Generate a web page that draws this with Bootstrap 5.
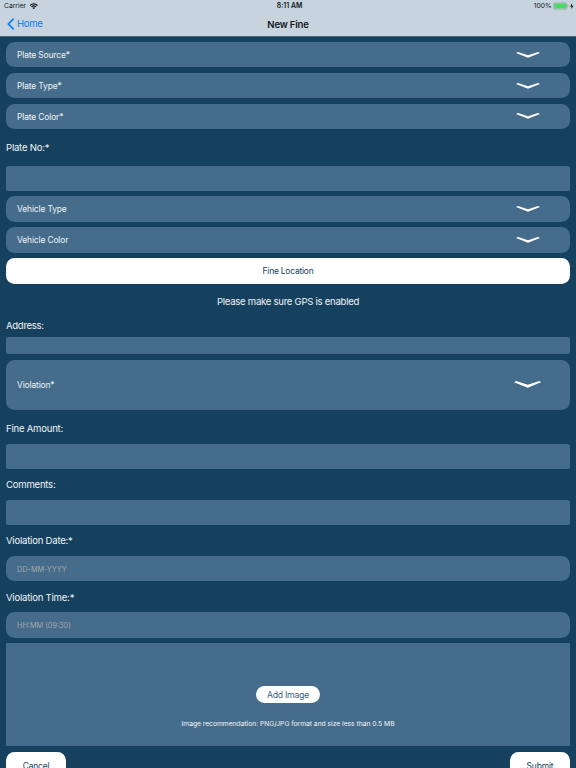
<!DOCTYPE html>
<html lang="en">
<head>
<meta charset="utf-8">
<meta name="viewport" content="width=device-width, initial-scale=1">
<title>New Fine</title>
<link href="https://cdn.jsdelivr.net/npm/bootstrap@5.3.0/dist/css/bootstrap.min.css" rel="stylesheet">
<style>
:root{--deep:#15415f;--field:#456c8b;--bar:#c7d3dd;--ios:#087cff}
html,body{height:768px;overflow:hidden}
body{background:var(--deep);font-family:Inter,"Liberation Sans",sans-serif;color:#f0f4f7;line-height:1}
.top-bar{height:37px;background:linear-gradient(var(--bar) 36px,#45687f 36px);color:#10161c}
.status-line{height:12px;font-size:6.75px}
.status-line>*,.title-line>*{flex:1 1 0}
.wifi-icon{margin-left:2.4px}
.st-time{font-size:6.9px;margin-left:-1px}
.title-line{height:23.8px;font-size:9.56px;letter-spacing:-.18px;padding-top:1.4px}
.back-link{color:var(--ios);letter-spacing:-.3px}
.form-area{padding:5px 6px 0}
.pick{height:25.3px;margin-bottom:5.6px;border-radius:8.5px;background:var(--field);padding:0 30.5px 0 11px;font-size:8.44px;letter-spacing:-.13px;color:#f0f4f7;border:0}
.pick-head span{padding-top:.9px}
.pick-tall{height:50.4px;margin-bottom:0;padding-right:29px}
.pick-tall svg{margin-bottom:2px}
.entry,.entry:focus{display:block;width:100%;min-height:0;height:25.2px;border:0;border-radius:2.5px;background:var(--field);padding:0 11px;font-size:7.3px;line-height:1;color:#fff}
.entry-round,.entry-round:focus{border-radius:8.5px;height:25.5px;padding-top:1.2px}
.entry::placeholder{color:#a3a8ac;opacity:1}
.entry-slim{height:16.6px;margin-bottom:6px}
.caption{display:flex;align-items:center;font-size:9.56px;letter-spacing:-.22px;height:30.8px;margin:0}
.cap-plate{height:36.7px}
.after-plate{height:5.5px}
.gps-note{height:36.2px;letter-spacing:-.26px}
.cap-address{height:17.5px;padding-bottom:6px;letter-spacing:-.29px}
.cap-first{height:33.6px;padding-top:3px}
.cap-time{padding-top:2px}
.locate{height:25.4px;border-radius:8.5px;font-size:8.44px;letter-spacing:-.2px;color:var(--deep);padding:0;border:0}
.photo-box{height:102.8px;background:var(--field);margin-top:5.6px;padding-top:43px}
.add-btn{width:64.4px;height:17.2px;padding:1px 0 0;border:0;font-size:8.7px;line-height:16.2px;letter-spacing:-.28px;color:#3a6486}
.hint{font-size:6.75px;letter-spacing:-.03px;margin-top:17.4px}
.foot{margin-top:5.6px}
.foot-btn{width:60px;height:28px;border-radius:8.5px;font-size:8.44px;letter-spacing:-.15px;color:var(--deep);padding:1.6px 0 0;border:0}
svg{display:block;flex:none}
</style>
<script src="https://cdn.jsdelivr.net/npm/bootstrap@5.3.0/dist/js/bootstrap.bundle.min.js"></script>
</head>
<body>
<svg class="d-none"><symbol id="chev" viewBox="0 0 24 6" preserveAspectRatio="none"><path d="M0 1 2 0l10 3.200L22 0l2 1L12 5.700Z" fill="#fff"/></symbol></svg>
<header class="top-bar">
  <div class="status-line d-flex align-items-center">
    <div class="d-flex align-items-center ps-1"><span>Carrier</span>
      <svg class="wifi-icon" width="9.600" height="6.500" viewBox="-1 0 18 12"><path d="M1 4.500a10 10 0 0 1 14 0M3.700 7.200a6.200 6.200 0 0 1 8.600 0" fill="none" stroke="#10161c" stroke-width="2.300"/><path d="m8 11.800-2.600-2.900a4 4 0 0 1 5.200 0z" fill="#10161c"/></svg>
    </div>
    <div class="text-center fw-semibold"><span class="st-time">8:11 AM</span></div>
    <div class="d-flex align-items-center justify-content-end"><span>100%</span>
      <svg width="24.300" height="8" viewBox=".7 0 24.300 8"><rect x="2.300" y=".9" width="13.200" height="6.300" rx="1.300" fill="#c7d3dd" stroke="#8b969e" stroke-width=".6"/><rect x="3" y="1.600" width="11.800" height="4.900" rx=".7" fill="#4cd964"/><path d="M16.200 3v2.200q.9-.3.900-1.100t-.9-1.100" fill="#8b969e"/><path d="m20.900 1.300-2.200 3.200h1.500l-.4 2.600 2.500-3.400h-1.600z" fill="#10161c"/></svg>
    </div>
  </div>
  <nav class="title-line d-flex align-items-center">
    <div><a class="back-link d-inline-flex align-items-center text-decoration-none" href="#"><svg width="17" height="12" viewBox="0 0 17 12"><path d="M13.600.6 8.400 6l5.200 5.400" fill="none" stroke="#087cff" stroke-width="1.700"/></svg><span>Home</span></a></div>
    <div class="text-center fw-semibold"><span>New Fine</span></div>
    <div></div>
  </nav>
</header>
<main class="form-area">
  <button type="button" class="pick pick-head w-100 d-flex align-items-center justify-content-between"><span>Plate Source*</span><svg width="24" height="6"><use href="#chev"/></svg></button>
  <button type="button" class="pick pick-head w-100 d-flex align-items-center justify-content-between"><span>Plate Type*</span><svg width="24" height="6"><use href="#chev"/></svg></button>
  <button type="button" class="pick pick-head w-100 d-flex align-items-center justify-content-between mb-0"><span>Plate Color*</span><svg width="24" height="6"><use href="#chev"/></svg></button>
  <label class="caption cap-plate" for="plate">Plate No:*</label>
  <input id="plate" class="form-control entry">
  <div class="after-plate"></div>
  <button type="button" class="pick w-100 d-flex align-items-center justify-content-between"><span>Vehicle Type</span><svg width="24" height="6"><use href="#chev"/></svg></button>
  <button type="button" class="pick w-100 d-flex align-items-center justify-content-between"><span>Vehicle Color</span><svg width="24" height="6"><use href="#chev"/></svg></button>
  <button type="button" class="btn btn-light bg-white locate w-100 d-block">Fine Location</button>
  <p class="caption justify-content-center gps-note">Please make sure GPS is enabled</p>
  <label class="caption cap-address" for="address">Address:</label>
  <input id="address" class="form-control entry entry-slim">
  <button type="button" class="pick pick-tall w-100 d-flex align-items-center justify-content-between"><span>Violation*</span><svg width="27.500" height="7"><use href="#chev"/></svg></button>
  <label class="caption cap-first" for="amount">Fine Amount:</label>
  <input id="amount" class="form-control entry">
  <label class="caption" for="comments">Comments:</label>
  <input id="comments" class="form-control entry">
  <label class="caption" for="vdate">Violation Date:*</label>
  <input id="vdate" class="form-control entry entry-round" placeholder="DD-MM-YYYY">
  <label class="caption cap-time" for="vtime">Violation Time:*</label>
  <input id="vtime" class="form-control entry entry-round" placeholder="HH:MM (09:30)">
  <section class="photo-box d-flex flex-column align-items-center">
    <button type="button" class="btn btn-light bg-white rounded-pill add-btn">Add Image</button>
    <p class="hint mb-0">Image recommendation: PNG/JPG format and size less than 0.5 MB</p>
  </section>
  <div class="foot d-flex justify-content-between">
    <button type="button" class="btn btn-light bg-white foot-btn">Cancel</button>
    <button type="button" class="btn btn-light bg-white foot-btn">Submit</button>
  </div>
</main>
</body>
</html>
